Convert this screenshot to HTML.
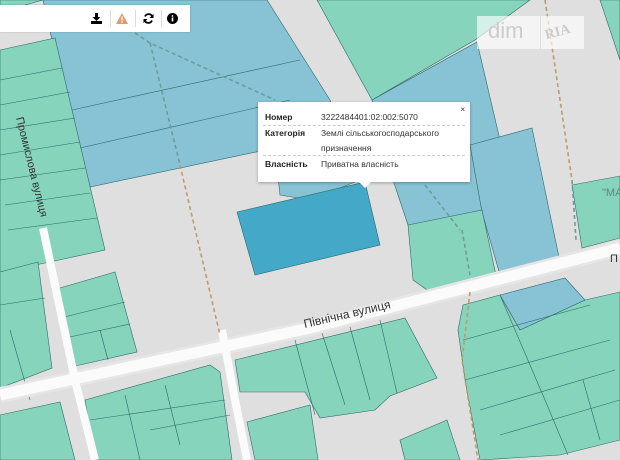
<!DOCTYPE html>
<html><head><meta charset="utf-8"><style>
body{margin:0;width:620px;height:460px;overflow:hidden;background:#e0dfdf;font-family:"Liberation Sans",sans-serif;position:relative}
svg{position:absolute;left:0;top:0}
.tb{position:absolute;left:0;top:5px;width:190px;height:27px;background:#fff;box-shadow:0 0 2px rgba(0,0,0,.2)}
.tb svg{position:absolute;top:8px}
.sep{position:absolute;top:5px;width:1px;height:17px;background:#ddd}
.pop{position:absolute;left:258px;top:102px;width:212px;height:80px;background:#fff;box-shadow:0 1px 3px rgba(0,0,0,.3);font-size:8.5px;color:#333}
.pop .l{position:absolute;left:7px;font-weight:bold;color:#222}
.pop .v{position:absolute;left:63px}
.pop .d{position:absolute;left:5px;right:5px;border-top:1px dashed #ccc}
.arr{position:absolute;left:359px;top:182px;width:0;height:0;border-left:6px solid transparent;border-right:6px solid transparent;border-top:6px solid #fff}
.logo{position:absolute;left:477px;top:16px;width:107px;height:33px;background:rgba(255,255,255,.65)}
</style></head><body>
<svg width="620" height="460" viewBox="0 0 620 460">
<g stroke="#2b6a6a" stroke-width="0.6">
<polygon points="0,0 43,0 0,12" fill="#86d4bc"/>
<polygon points="317,0 530,0 475,40 372,100" fill="#86d4bc"/>
<polygon points="600,0 620,0 620,60" fill="#86d4bc"/>
<polygon points="43,0 267,0 330,100 360,180 310,200 280,195 275,148 90,187 52,40" fill="#88c2d5"/>
<polygon points="372,100 477,42 500,140 472,150 482,212 408,225 393,180" fill="#88c2d5"/>
<polygon points="470,145 532,128 560,262 500,275 482,212" fill="#88c2d5"/>
<polygon points="237,212 365,182 380,245 255,275" fill="#44a8c8"/>
<polygon points="408,225 482,210 497,280 430,292 413,280" fill="#86d4bc"/>
<polygon points="572,185 620,176 620,238 582,248" fill="#86d4bc"/>
<polygon points="0,50 55,38 105,250 50,262 0,272" fill="#86d4bc"/>
<polygon points="0,272 38,262 52,368 0,388" fill="#86d4bc"/>
<polygon points="53,290 115,272 137,352 80,365 70,366" fill="#86d4bc"/>
<polygon points="0,415 60,402 75,460 0,460" fill="#86d4bc"/>
<polygon points="85,400 210,365 220,372 232,460 95,460" fill="#86d4bc"/>
<polygon points="235,360 405,318 437,378 390,396 375,410 320,418 305,392 240,392" fill="#86d4bc"/>
<polygon points="247,422 310,405 318,460 255,460" fill="#86d4bc"/>
<polygon points="400,440 447,420 460,460 405,460" fill="#86d4bc"/>
<polygon points="463,305 500,295 520,330 585,300 620,292 620,440 560,455 480,460 465,380 458,330" fill="#86d4bc"/>
<polygon points="500,295 565,278 585,300 520,330" fill="#88c2d5"/>
</g>
<g stroke="#2b6a6a" stroke-width="0.6" fill="none">
<path d="M0,80 L62,68 M0,105 L70,92 M0,130 L75,118 M0,155 L80,142 M0,180 L85,168 M5,205 L90,193 M8,230 L97,218 M72,110 L300,60 M80,148 L290,100 M10,330 L30,400 M0,305 L45,298 M60,318 L125,302 M65,338 L130,324 M100,330 L108,360 M125,395 L140,460 M165,385 L180,445 M90,420 L225,400 M295,340 L315,415 M322,333 L345,405 M350,327 L370,400 M380,320 L397,393 M500,295 L545,400 L568,455 M463,340 L590,305 M465,380 L610,340 M480,410 L615,370 M500,435 L620,400 M583,380 L600,440 M150,430 L230,415"/>
</g>
<path d="M0,395 L310,328 L620,248" stroke="#e6e6e6" stroke-width="16" fill="none"/>
<path d="M0,395 L310,328 L620,248" stroke="#fbfbfb" stroke-width="11" fill="none"/>
<path d="M43,228 L75,380 L95,460" stroke="#fbfbfb" stroke-width="8" fill="none"/>
<path d="M222,330 L235,400 L247,460" stroke="#fbfbfb" stroke-width="8" fill="none"/>
<g fill="none" stroke-width="1.6" stroke-dasharray="4,3">
<path d="M135,33 L150,43 L275,100 M150,43 L180,165 M425,185 L460,230 M572,180 L576,240 M462,230 L470,275" stroke="#6a9e96"/>
<path d="M180,165 L220,335 M545,0 L572,180 M470,292 L462,360 L478,460" stroke="#c09a6a"/>
</g>
<text x="0" y="0" transform="translate(348,318) rotate(-13)" text-anchor="middle" font-size="12" fill="#333" font-family="Liberation Sans">Північна вулиця</text>
<text x="0" y="0" transform="translate(16,118) rotate(76)" font-size="11" fill="#333" font-family="Liberation Sans">Промислова вулиця</text>
<text x="602" y="196" font-size="11" fill="#5a8a80" font-family="Liberation Sans">"МА</text>
<text x="610" y="262" font-size="11" fill="#333" font-family="Liberation Sans">П</text>
</svg>
<div class="tb">
<svg style="left:91px" width="11" height="11" viewBox="0 0 11 11"><path d="M4,0h3v4h2.5L5.5,8L1.5,4H4z" fill="#000"/><rect x="0" y="8" width="11" height="3" fill="#000"/></svg>
<div class="sep" style="left:110px"></div>
<svg style="left:116px" width="12" height="11" viewBox="0 0 12 11"><path d="M6,0L12,11H0z" fill="#e8976a"/><rect x="5.3" y="3.5" width="1.4" height="4" fill="#fff"/><rect x="5.3" y="8.3" width="1.4" height="1.4" fill="#fff"/></svg>
<div class="sep" style="left:135px"></div>
<svg style="left:143px" width="11" height="11" viewBox="0 0 11 11"><path d="M9.5,4A4,4 0 0 0 2,3.5 M1.5,7A4,4 0 0 0 9,7.5" stroke="#000" stroke-width="1.8" fill="none"/><path d="M10.5,1v4h-4z M0.5,10V6h4z" fill="#000"/></svg>
<div class="sep" style="left:161px"></div>
<svg style="left:167px" width="11" height="11" viewBox="0 0 11 11"><circle cx="5.5" cy="5.5" r="5.5" fill="#000"/><rect x="4.7" y="4.5" width="1.6" height="4" fill="#fff"/><circle cx="5.5" cy="3" r="0.9" fill="#fff"/></svg>
</div>
<div class="logo"><span style="position:absolute;left:11px;top:2px;font-size:22px;color:#ccc">dim</span><div style="position:absolute;left:63px;top:0;width:1px;height:33px;background:#ddd"></div><span style="position:absolute;left:68px;top:9px;font-size:14px;font-family:'Liberation Serif',serif;font-weight:bold;color:#ccc;transform:rotate(-15deg)">RIA</span></div>
<div class="pop">
<span style="position:absolute;right:5px;top:3px;font-size:8px">×</span>
<span class="l" style="top:10px">Номер</span><span class="v" style="top:10px">3222484401:02:002:5070</span>
<div class="d" style="top:23px"></div>
<span class="l" style="top:26px">Категорія</span><span class="v" style="top:26px">Землі сільськогосподарського</span>
<span class="v" style="top:41px">призначення</span>
<div class="d" style="top:53px"></div>
<span class="l" style="top:57px">Власність</span><span class="v" style="top:57px">Приватна власність</span>
</div>
<div class="arr"></div>
</body></html>
